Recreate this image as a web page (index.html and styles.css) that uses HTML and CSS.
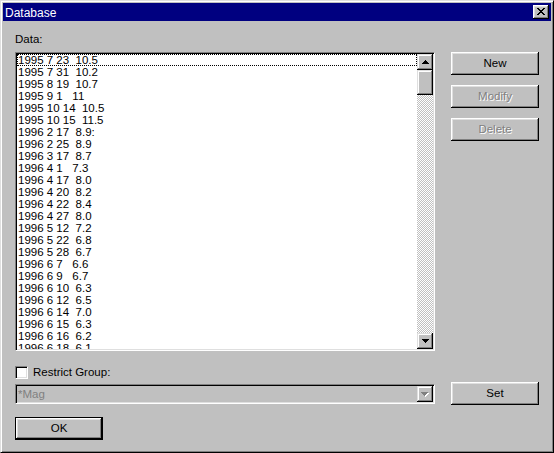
FILE: index.html
```html
<!DOCTYPE html>
<html>
<head>
<meta charset="utf-8">
<link rel="stylesheet" href="styles.css">
</head>
<body>
<div class="window">
  <div class="titlebar">
    <span class="title">Database</span>
    <div class="close">
      <svg width="8" height="7" viewBox="0 0 8 7" shape-rendering="crispEdges"><path fill="#000" d="M0 0h2v1H0z M6 0h2v1H6z M1 1h2v1H1z M5 1h2v1H5z M2 2h4v1H2z M3 3h2v1H3z M2 4h4v1H2z M1 5h2v1H1z M5 5h2v1H5z M0 6h2v1H0z M6 6h2v1H6z"/></svg>
    </div>
  </div>
  <div class="body">
    <div class="label data-label">Data:</div>
    <div class="listbox">
      <ul class="items">
        <li class="focused">1995 7 23  10.5</li>
        <li>1995 7 31  10.2</li>
        <li>1995 8 19  10.7</li>
        <li>1995 9 1   11</li>
        <li>1995 10 14  10.5</li>
        <li>1995 10 15  11.5</li>
        <li>1996 2 17  8.9:</li>
        <li>1996 2 25  8.9</li>
        <li>1996 3 17  8.7</li>
        <li>1996 4 1   7.3</li>
        <li>1996 4 17  8.0</li>
        <li>1996 4 20  8.2</li>
        <li>1996 4 22  8.4</li>
        <li>1996 4 27  8.0</li>
        <li>1996 5 12  7.2</li>
        <li>1996 5 22  6.8</li>
        <li>1996 5 28  6.7</li>
        <li>1996 6 7   6.6</li>
        <li>1996 6 9   6.7</li>
        <li>1996 6 10  6.3</li>
        <li>1996 6 12  6.5</li>
        <li>1996 6 14  7.0</li>
        <li>1996 6 15  6.3</li>
        <li>1996 6 16  6.2</li>
        <li>1996 6 18  6.1</li>
      </ul>
      <div class="vscroll">
        <div class="sbtn">
          <svg width="7" height="4" viewBox="0 0 7 4" shape-rendering="crispEdges"><path fill="#000" d="M3 0h1v1H3z M2 1h3v1H2z M1 2h5v1H1z M0 3h7v1H0z"/></svg>
        </div>
        <div class="thumb"></div>
        <div class="track"></div>
        <div class="sbtn">
          <svg width="7" height="4" viewBox="0 0 7 4" shape-rendering="crispEdges"><path fill="#000" d="M0 0h7v1H0z M1 1h5v1H1z M2 2h3v1H2z M3 3h1v1H3z"/></svg>
        </div>
      </div>
    </div>
    <div class="side-buttons">
      <div class="btn">New</div>
      <div class="btn disabled">Modify</div>
      <div class="btn disabled">Delete</div>
    </div>
    <div class="check-row">
      <span class="checkbox"></span>
      <span class="label">Restrict Group:</span>
    </div>
    <div class="combo">
      <span class="combo-text">*Mag</span>
      <div class="sbtn combo-btn">
        <svg width="8" height="5" viewBox="0 0 8 5" shape-rendering="crispEdges"><path fill="#fff" d="M1 1h7v1H1z M2 2h5v1H2z M3 3h3v1H3z M4 4h1v1H4z"/><path fill="#808080" d="M0 0h7v1H0z M1 1h5v1H1z M2 2h3v1H2z M3 3h1v1H3z"/></svg>
      </div>
    </div>
    <div class="btn set-btn">Set</div>
    <div class="btn default ok-btn">OK</div>
  </div>
</div>
</body>
</html>
```

FILE: styles.css
```css
* {
  box-sizing: border-box;
}

html, body {
  margin: 0;
  padding: 0;
  background: #c0c0c0;
}

body {
  font-family: "Liberation Sans", Arial, sans-serif;
  font-size: 11px;
  color: #000;
}

.window {
  width: 554px;
  height: 453px;
  background: #c0c0c0;
  border: 1px solid;
  border-color: #dfdfdf #000 #000 #dfdfdf;
  box-shadow: inset 1px 1px #fff, inset -1px -1px #808080;
  padding: 2px;
  display: flex;
  flex-direction: column;
}

.titlebar {
  height: 18px;
  background: #000080;
  color: #fff;
  display: flex;
  align-items: center;
  justify-content: space-between;
  padding: 0 2px 0 2px;
}

.title {
  font-size: 12px;
  line-height: 14px;
  padding-top: 1px;
}

.close {
  width: 16px;
  height: 14px;
  background: #c0c0c0;
  box-shadow: inset -1px -1px #000, inset 1px 1px #fff, inset -2px -2px #808080, inset 2px 2px #dfdfdf;
  display: flex;
  align-items: flex-start;
  justify-content: flex-start;
  padding: 3px 0 0 4px;
}

.close svg {
  display: block;
}

.body {
  flex: 1;
  display: grid;
  grid-template-columns: 420px 88px;
  column-gap: 16px;
  grid-template-rows: auto auto auto auto auto;
  align-content: start;
  align-items: start;
  padding: 12px 0 0 12px;
}

.label {
  line-height: 13px;
  white-space: nowrap;
}

.data-label {
  grid-column: 1;
  grid-row: 1;
  height: 13px;
  margin-bottom: 6px;
  font-size: 11.5px;
}

.listbox {
  grid-column: 1;
  grid-row: 2;
  height: 299px;
  background: #fff;
  border: 1px solid;
  border-color: #808080 #fff #fff #808080;
  box-shadow: inset 1px 1px #000, inset -1px -1px #dfdfdf;
  padding: 1px;
  display: flex;
  overflow: hidden;
}

.items {
  list-style: none;
  margin: 0;
  padding: 0;
  flex: 1;
  overflow: hidden;
  font-size: 11.5px;
}

.items li {
  height: 12px;
  line-height: 12px;
  white-space: pre;
  padding-left: 1px;
}

.items li.focused {
  outline: 1px dotted #000;
  outline-offset: -1px;
}

.vscroll {
  width: 16px;
  display: flex;
  flex-direction: column;
}

.sbtn {
  width: 16px;
  height: 16px;
  flex: none;
  background: #c0c0c0;
  box-shadow: inset -1px -1px #000, inset 1px 1px #dfdfdf, inset -2px -2px #808080, inset 2px 2px #fff;
  display: flex;
  align-items: center;
  justify-content: center;
}

.sbtn svg {
  display: block;
}

.thumb {
  height: 25px;
  flex: none;
  background: #c0c0c0;
  box-shadow: inset -1px -1px #000, inset 1px 1px #dfdfdf, inset -2px -2px #808080, inset 2px 2px #fff;
}

.track {
  flex: 1;
  background-image: repeating-conic-gradient(#c0c0c0 0 25%, #fff 0 50%);
  background-size: 2px 2px;
}

.side-buttons {
  grid-column: 2;
  grid-row: 2;
  display: flex;
  flex-direction: column;
  gap: 10px;
}

.btn {
  height: 23px;
  width: 88px;
  background: #c0c0c0;
  box-shadow: inset -1px -1px #000, inset 1px 1px #fff, inset -2px -2px #808080, inset 2px 2px #dfdfdf;
  display: flex;
  align-items: center;
  justify-content: center;
  line-height: 13px;
  padding-bottom: 1px;
  font-size: 11.5px;
}

.btn.disabled {
  color: #808080;
  text-shadow: 1px 1px 0 #fff;
}

.check-row {
  grid-column: 1;
  grid-row: 3;
  margin-top: 15px;
  display: flex;
  align-items: center;
  gap: 5px;
  height: 13px;
}

.checkbox {
  width: 13px;
  height: 13px;
  background: #fff;
  border: 1px solid;
  border-color: #808080 #fff #fff #808080;
  box-shadow: inset 1px 1px #000, inset -1px -1px #dfdfdf;
}

.check-row .label {
  font-size: 11.5px;
}

.combo {
  grid-column: 1;
  grid-row: 4;
  margin-top: 5px;
  height: 20px;
  background: #c0c0c0;
  border: 1px solid;
  border-color: #808080 #fff #fff #808080;
  box-shadow: inset 1px 1px #000, inset -1px -1px #dfdfdf;
  padding: 1px;
  display: flex;
  align-items: center;
}

.combo-text {
  flex: 1;
  color: #808080;
  padding-left: 1px;
  line-height: 16px;
  font-size: 11.5px;
}

.combo-btn {
  height: 16px;
}

.set-btn {
  grid-column: 2;
  grid-row: 4;
  margin-top: 3px;
}

.ok-btn {
  grid-column: 1;
  grid-row: 5;
  margin-top: 12px;
}

.btn.default {
  border: 1px solid #000;
}
```
